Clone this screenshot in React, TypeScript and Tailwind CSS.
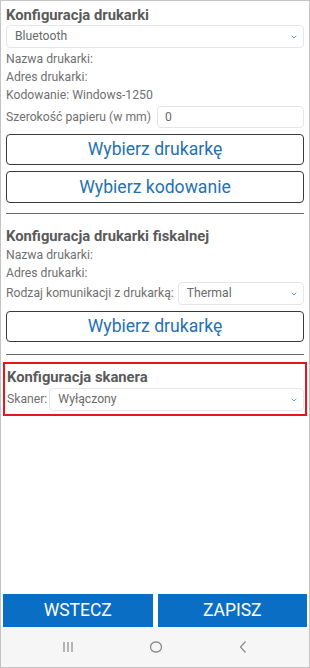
import { ChevronDown } from "lucide-react";

const font = { fontFamily: "Roboto, 'Noto Sans', sans-serif" };

function Select({ value, className = "" }: { value: string; className?: string }) {
  return (
    <div
      className={`flex h-[23px] items-center justify-between rounded-[4px] border border-[#e6e6e6] bg-white pl-[8px] pr-[5px] text-[12.2px] text-[#6a6a6a] ${className}`}
    >
      <span>{value}</span>
      <ChevronDown size={8} strokeWidth={3} className="text-[#4ba4e0]" />
    </div>
  );
}

function Label({ children }: { children: React.ReactNode }) {
  return <div className="flex h-[18px] items-center text-[12.2px] text-[#707070]">{children}</div>;
}

function Title({ children }: { children: React.ReactNode }) {
  return (
    <div className="flex h-[20px] items-center text-[14.8px] font-bold text-[#5a5a5a]">
      {children}
    </div>
  );
}

function OutlineButton({ label, className = "" }: { label: string; className?: string }) {
  return (
    <button
      className={`flex w-full items-center justify-center rounded-[4px] border border-[#3a3a3a] bg-white text-[17.6px] text-[#2471b3] ${className}`}
    >
      {label}
    </button>
  );
}

export default function App() {
  return (
    <div
      className="flex h-[668px] w-[310px] flex-col overflow-hidden border border-[#c4c4c4] bg-white"
      style={font}
    >
      <div className="flex flex-1 flex-col px-[5px]">
        <div className="mt-[4px]">
          <Title>Konfiguracja drukarki</Title>
        </div>
        <Select value="Bluetooth" />
        <div className="mt-[2px]">
          <Label>Nazwa drukarki:</Label>
          <Label>Adres drukarki:</Label>
          <Label>Kodowanie: Windows-1250</Label>
        </div>
        <div className="mt-[2px] flex h-[22px] items-center gap-[6px]">
          <span className="whitespace-nowrap text-[12.2px] text-[#707070]">Szerokość papieru (w mm)</span>
          <div className="flex h-full flex-1 items-center rounded-[4px] border border-[#e6e6e6] pl-[7px] text-[12.2px] text-[#6a6a6a]">
            0
          </div>
        </div>
        <OutlineButton label="Wybierz drukarkę" className="mt-[6px] h-[31px]" />
        <OutlineButton label="Wybierz kodowanie" className="mt-[6px] h-[32px]" />
        <div className="mt-[10px] h-px bg-[#6a6a6a]" />

        <div className="mt-[12px]">
          <Title>Konfiguracja drukarki fiskalnej</Title>
        </div>
        <Label>Nazwa drukarki:</Label>
        <Label>Adres drukarki:</Label>
        <div className="flex h-[23px] items-center gap-[4px]">
          <span className="whitespace-nowrap text-[12.2px] text-[#707070]">
            Rodzaj komunikacji z drukarką:
          </span>
          <Select value="Thermal" className="flex-1" />
        </div>
        <OutlineButton label="Wybierz drukarkę" className="mt-[6px] h-[31px]" />
        <div className="mt-[12px] h-px bg-[#6a6a6a]" />

        <div className="-mx-[3px] mt-[7px] border-2 border-[#e8161b] pb-[3px] pl-[2px] pr-px pt-[3px]">
          <Title>Konfiguracja skanera</Title>
          <div className="mt-px flex h-[23px] items-center gap-[2px]">
            <span className="text-[12.2px] text-[#707070]">Skaner:</span>
            <Select value="Wyłączony" className="flex-1" />
          </div>
        </div>
      </div>

      <div className="flex h-[33px] gap-[5px] px-[2px]">
        <button className="flex flex-1 items-center justify-center bg-[#0a6fc4] text-[17.5px] text-white">
          WSTECZ
        </button>
        <button className="flex flex-1 items-center justify-center bg-[#0a6fc4] text-[17.5px] text-white">
          ZAPISZ
        </button>
      </div>

      <div className="flex h-[40px] items-center justify-between bg-[#f6f6f6] px-[61px]">
        <svg width="12" height="12" viewBox="0 0 12 12" className="text-[#8a8a8a]">
          <path d="M2 1v10M6 1v10M10 1v10" stroke="currentColor" strokeWidth="1.2" />
        </svg>
        <svg width="14" height="14" viewBox="0 0 14 14" className="text-[#8a8a8a]">
          <rect x="1.5" y="2" width="11" height="10" rx="5" fill="none" stroke="currentColor" strokeWidth="1.3" />
        </svg>
        <svg width="10" height="14" viewBox="0 0 10 14" className="text-[#8a8a8a]">
          <path d="M7.5 1.5L2.5 7l5 5.5" fill="none" stroke="currentColor" strokeWidth="1.2" />
        </svg>
      </div>
    </div>
  );
}
